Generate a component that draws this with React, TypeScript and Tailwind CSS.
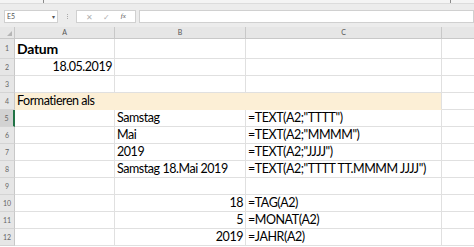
import React from "react";

type Row = {
  n: string;
  h: string;
  a?: React.ReactNode;
  aRight?: boolean;
  b?: string;
  bRight?: boolean;
  c?: string;
  yellow?: boolean;
  sel?: boolean;
};

const rows: Row[] = [
  { n: "1", h: "h-[20px]", a: <span className="font-bold text-[14px] tracking-[-0.3px]">Datum</span> },
  { n: "2", h: "h-[17px]", a: "18.05.2019", aRight: true },
  { n: "3", h: "h-[17px]" },
  { n: "4", h: "h-[17px]", a: "Formatieren als", yellow: true },
  { n: "5", h: "h-[17px]", b: "Samstag", c: '=TEXT(A2;"TTTT")', sel: true },
  { n: "6", h: "h-[17px]", b: "Mai", c: '=TEXT(A2;"MMMM")' },
  { n: "7", h: "h-[17px]", b: "2019", c: '=TEXT(A2;"JJJJ")' },
  { n: "8", h: "h-[17px]", b: "Samstag 18.Mai 2019", c: '=TEXT(A2;"TTTT TT.MMMM JJJJ")' },
  { n: "9", h: "h-[17px]" },
  { n: "10", h: "h-[17px]", b: "18", bRight: true, c: "=TAG(A2)" },
  { n: "11", h: "h-[17px]", b: "5", bRight: true, c: "=MONAT(A2)" },
  { n: "12", h: "h-[17px]", b: "2019", bRight: true, c: "=JAHR(A2)" },
];

export default function App() {
  return (
    <div
      className="w-[474px] h-[247px] overflow-hidden bg-white text-black"
      style={{ fontFamily: "Lato, 'Open Sans', sans-serif" }}
    >
      {/* top chrome */}
      <div className="h-[27px] bg-[#ececec] flex flex-col">
        <div className="h-[4px] bg-[#f4f4f4] relative border-b border-[#dcdcdc]">
          <div className="absolute left-[43px] top-0 w-[1px] h-[3px] bg-[#8a8a8a]" />
          <div className="absolute left-[450px] top-0 w-[1px] h-[3px] bg-[#8a8a8a]" />
        </div>
        <div className="flex items-center mt-[6px] h-[13px]">
          <div className="ml-[4px] w-[54px] h-[13px] bg-white border border-[#d0d0d0] flex items-center justify-between px-[2px]">
            <span className="text-[7px] text-[#555] leading-none">E5</span>
            <span className="text-[6px] text-[#555] leading-none">▾</span>
          </div>
          <div className="ml-[9px] flex flex-col gap-[1px]">
            <div className="w-[1px] h-[1px] bg-[#aaa]" />
            <div className="w-[1px] h-[1px] bg-[#aaa]" />
            <div className="w-[1px] h-[1px] bg-[#aaa]" />
          </div>
          <div className="ml-[8px] w-[60px] h-[13px] bg-white border border-[#d0d0d0] flex items-center justify-around px-[4px]">
            <span className="text-[8px] text-[#b0b0b0] leading-none">✕</span>
            <span className="text-[8px] text-[#b0b0b0] leading-none">✓</span>
            <span className="text-[7px] text-[#555] italic leading-none" style={{ fontFamily: "'Liberation Serif', serif" }}>fx</span>
          </div>
          <div className="ml-[3px] flex-1 h-[13px] bg-white border border-[#d0d0d0]" />
        </div>
      </div>

      {/* column headers */}
      <div className="flex h-[12px] bg-[#e6e6e6] border-b border-[#c8c8c8] text-[7px] text-[#555] leading-none">
        <div className="w-[15px] border-r border-[#c8c8c8] relative">
          <div className="absolute right-[2px] bottom-[2px] w-0 h-0 border-l-[5px] border-l-transparent border-b-[5px] border-b-[#b5b5b5]" />
        </div>
        <div className="w-[100px] border-r border-[#c8c8c8] flex items-center justify-center">A</div>
        <div className="w-[131px] border-r border-[#c8c8c8] flex items-center justify-center">B</div>
        <div className="w-[196px] border-r border-[#c8c8c8] flex items-center justify-center">C</div>
        <div className="flex-1" />
      </div>

      {/* rows */}
      {rows.map((r) => (
        <div key={r.n} className={`flex ${r.h} text-[12.5px] tracking-[-0.45px] leading-none`}>
          <div
            className={`w-[15px] shrink-0 flex items-center justify-center text-[7px] tracking-normal text-[#666] border-b border-[#d4d4d4] ${
              r.sel ? "bg-[#d2d2d2] border-r-2 border-r-[#217346]" : "bg-[#e6e6e6] border-r border-r-[#c8c8c8]"
            }`}
          >
            {r.n}
          </div>
          <div
            className={`w-[100px] shrink-0 flex items-end pb-[2px] px-[2px] border-b border-r ${
              r.aRight ? "justify-end" : "justify-start"
            } ${r.yellow ? "bg-[#fcefd6] border-[#fcefd6]" : "border-[#e0e0e0]"}`}
          >
            <span className="whitespace-nowrap">{r.a}</span>
          </div>
          <div
            className={`w-[131px] shrink-0 flex items-end pb-[2px] px-[2px] border-b border-r ${
              r.bRight ? "justify-end" : "justify-start"
            } ${r.yellow ? "bg-[#fcefd6] border-[#fcefd6]" : "border-[#e0e0e0]"}`}
          >
            <span className="whitespace-nowrap">{r.b}</span>
          </div>
          <div
            className={`w-[196px] shrink-0 flex items-end pb-[2px] px-[2px] border-b border-r ${
              r.yellow ? "bg-[#fcefd6] border-b-[#fcefd6] border-r-[#e0e0e0]" : "border-[#e0e0e0]"
            }`}
          >
            <span className="whitespace-nowrap">{r.c}</span>
          </div>
          <div className="flex-1 border-b border-[#e0e0e0]" />
        </div>
      ))}
    </div>
  );
}
